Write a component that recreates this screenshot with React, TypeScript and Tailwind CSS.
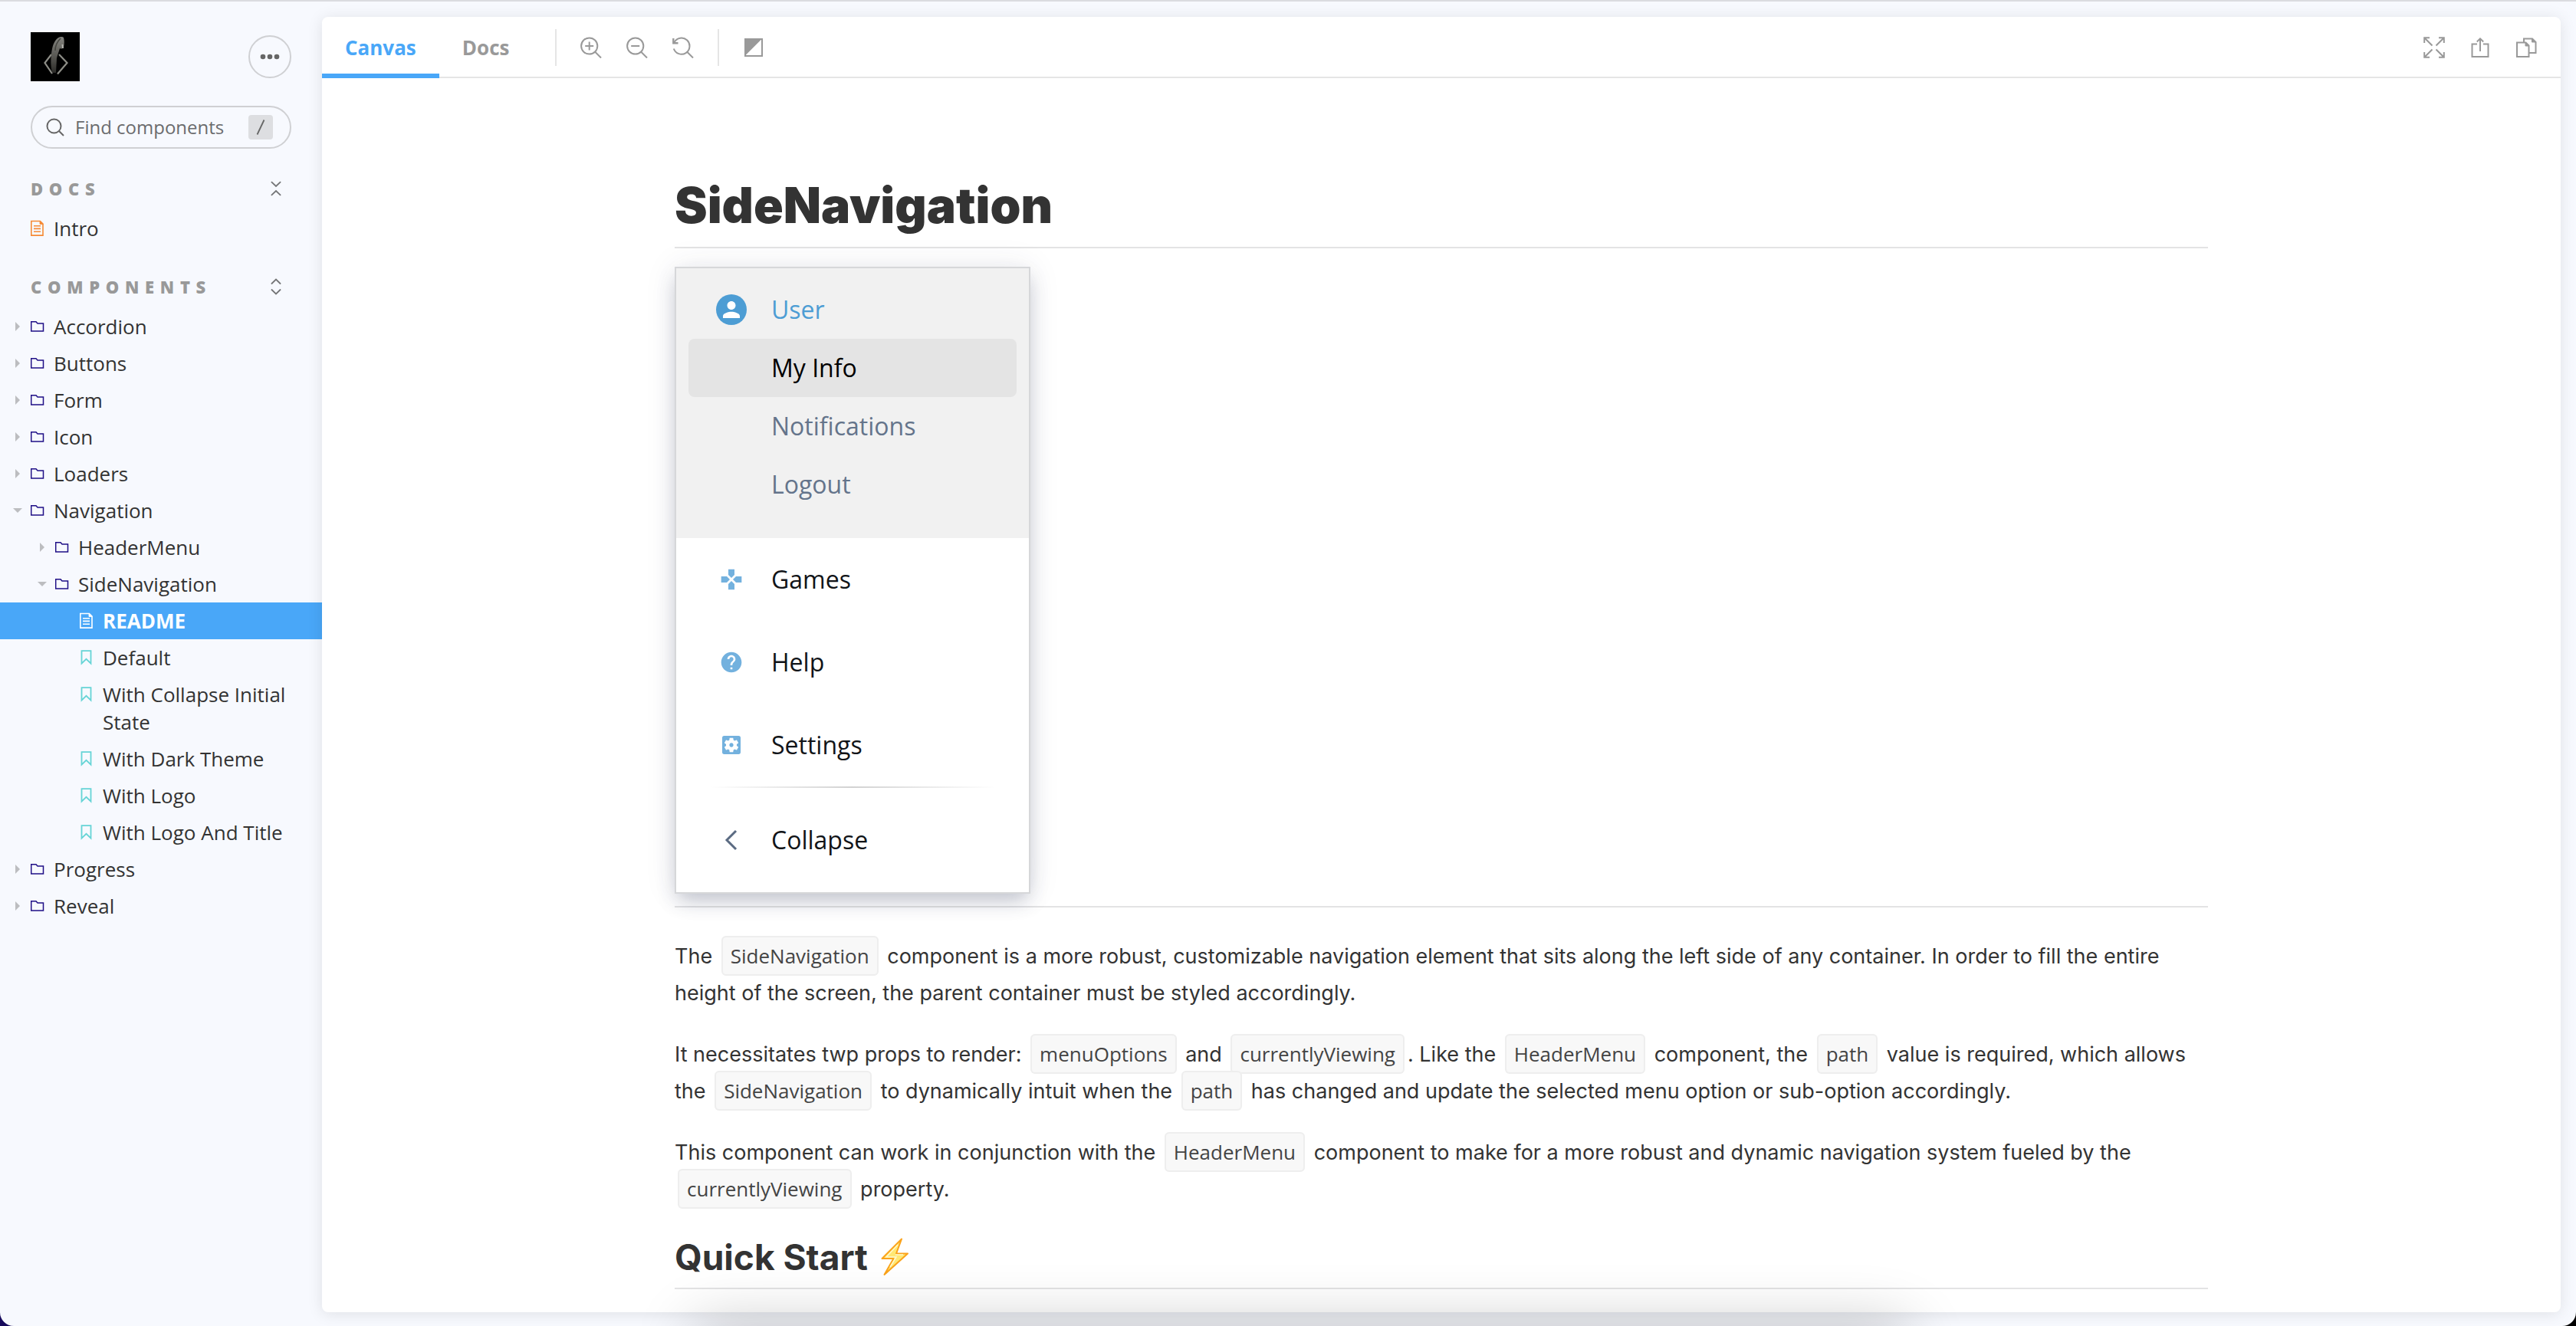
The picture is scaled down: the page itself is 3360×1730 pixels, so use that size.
import React from "react";
import { MdGames, MdHelp, MdSettingsApplications } from "react-icons/md";

type Kind = "folder" | "document" | "story";

type TreeItem = {
  label: string;
  kind: Kind;
  depth: 0 | 1 | 2;
  open?: boolean;
  selected?: boolean;
};

const components: TreeItem[] = [
  { label: "Accordion", kind: "folder", depth: 0 },
  { label: "Buttons", kind: "folder", depth: 0 },
  { label: "Form", kind: "folder", depth: 0 },
  { label: "Icon", kind: "folder", depth: 0 },
  { label: "Loaders", kind: "folder", depth: 0 },
  { label: "Navigation", kind: "folder", depth: 0, open: true },
  { label: "HeaderMenu", kind: "folder", depth: 1 },
  { label: "SideNavigation", kind: "folder", depth: 1, open: true },
  { label: "README", kind: "document", depth: 2, selected: true },
  { label: "Default", kind: "story", depth: 2 },
  { label: "With Collapse Initial State", kind: "story", depth: 2 },
  { label: "With Dark Theme", kind: "story", depth: 2 },
  { label: "With Logo", kind: "story", depth: 2 },
  { label: "With Logo And Title", kind: "story", depth: 2 },
  { label: "Progress", kind: "folder", depth: 0 },
  { label: "Reveal", kind: "folder", depth: 0 },
];

const indent = { 0: "pl-4", 1: "pl-12", 2: "pl-20" };

function KindIcon({ kind, selected }: { kind: Kind; selected?: boolean }) {
  if (kind === "folder") {
    return (
      <svg viewBox="0 0 18 24" className="h-6 w-[18px] text-[#1f0f86]" fill="none" stroke="currentColor" strokeWidth="1.5">
        <path d="M0.700 5.700h6.300l2 2.200h7.500v10.200H0.700z" />
      </svg>
    );
  }
  if (kind === "story") {
    return (
      <svg viewBox="0 0 18 24" className="h-6 w-[18px] text-[#66d4d6]" fill="none" stroke="currentColor" strokeWidth="1.8">
        <path d="M2.500 3.200h12v16.400l-6-5.800-6 5.800z" />
      </svg>
    );
  }
  return (
    <svg
      viewBox="0 0 18 24"
      className={selected ? "h-6 w-[18px] text-white" : "h-6 w-[18px] text-[#f68a35]"}
      fill="none"
      stroke="currentColor"
      strokeWidth="1.6"
    >
      <path d="M0.800 2.500h11.600l3.600 3.600v15H0.800z" />
      <path d="M12 2.300v4.200h4.200z" fill="currentColor" strokeWidth="0.8" />
      <path d="M4 8.800h9M4 12.400h9M4 16.200h9" />
    </svg>
  );
}

function TreeRow({ item }: { item: TreeItem }) {
  return (
    <li>
      <a
        href="#"
        className={`flex w-full items-start py-1.5 pr-8 text-[26px] leading-9 ${indent[item.depth]} ${
          item.selected ? "bg-[#49a7f8] font-bold text-white" : "text-[#333]"
        }`}
      >
        <span className="flex h-9 w-6 shrink-0 items-center">
          {item.kind === "folder" &&
            (item.open ? (
              <svg viewBox="0 0 14 12" className="h-3 w-3.5 text-[#bcbdc0]" fill="currentColor">
                <path d="M1 3h12L7 9z" />
              </svg>
            ) : (
              <svg viewBox="0 0 14 12" className="h-3 w-3.5 text-[#bcbdc0]" fill="currentColor">
                <path d="M4 0l6 6-6 6z" />
              </svg>
            ))}
        </span>
        <span className="mr-3 flex h-9 shrink-0 items-center">
          <KindIcon kind={item.kind} selected={item.selected} />
        </span>
        <span>{item.label}</span>
      </a>
    </li>
  );
}

function SectionHeading({ title, expand }: { title: string; expand?: boolean }) {
  return (
    <div className="flex h-8 items-center justify-between pr-[47px] pl-10">
      <h2 className="text-[22px] leading-[30px] font-extrabold tracking-[0.35em] text-[#999]">{title}</h2>
      <button type="button" aria-label={expand ? "Expand all" : "Collapse all"} className="px-1.5">
        <svg viewBox="0 0 14 22" className="h-[22px] w-3.5 text-[#747577]" fill="none" stroke="currentColor" strokeWidth="1.8" strokeLinecap="round">
          {expand ? <path d="M1.4 7L7 1.6 12.6 7M1.4 15L7 20.4l5.6-5.4" /> : <path d="M1.4 2.6L7 8l5.6-5.4M1.4 19.4L7 14l5.6 5.4" />}
        </svg>
      </button>
    </div>
  );
}

function Logo() {
  return (
    <svg viewBox="0 0 64 64" className="size-16" aria-label="Logo">
      <defs>
        <filter id="soft">
          <feGaussianBlur stdDeviation="0.7" />
        </filter>
        <linearGradient id="figure" x1="0" y1="0" x2="0" y2="1">
          <stop offset="0" stopColor="#84847f" />
          <stop offset="0.5" stopColor="#5c5b56" />
          <stop offset="1" stopColor="#2b2b28" />
        </linearGradient>
      </defs>
      <rect width="64" height="64" fill="#000" />
      <g filter="url(#soft)">
        <path d="M27 29l-8.500 11L28 54M37 29l10.500 11L35 54.500" fill="none" stroke="#8d8d86" strokeWidth="2.200" />
        <path d="M33 10c3-4 8-5 10-3 1 4 1 8 0 12-1 3-4 3-5 2-1 4-3 8-4 13l-1 19h-5c-2-8-2-17-1-25 1-7 2-13 6-18z" fill="url(#figure)" />
        <path d="M39 8c-4 4-7 10-7 16" fill="none" stroke="#44443f" strokeWidth="1.600" />
        <path d="M41.500 16l.5 5" stroke="#b5b5b0" strokeWidth="2" />
      </g>
    </svg>
  );
}

function Sidebar() {
  return (
    <aside className="flex w-[420px] shrink-0 flex-col">
      <div className="flex items-center justify-between px-10 pt-10">
        <a href="#">
          <Logo />
        </a>
        <button type="button" aria-label="Shortcuts" className="flex size-14 items-center justify-center rounded-full border-2 border-[#cfd0d3]">
          <svg viewBox="0 0 26 8" className="h-2 w-[26px] text-[#666]" fill="currentColor">
            <circle cx="4" cy="4" r="3.300" />
            <circle cx="13" cy="4" r="3.300" />
            <circle cx="22" cy="4" r="3.300" />
          </svg>
        </button>
      </div>
      <label className="mx-10 mt-8 flex h-14 items-center rounded-full border-2 border-[#cfd0d3] pr-[22px] pl-[18px]">
        <svg viewBox="0 0 24 24" className="size-6 shrink-0 text-[#666]" fill="none" stroke="currentColor" strokeWidth="2">
          <circle cx="10.500" cy="10.500" r="9" />
          <path d="M17 17l6 6" />
        </svg>
        <input
          type="text"
          aria-label="Find components"
          placeholder="Find components"
          className="ml-3.5 min-w-0 flex-1 bg-transparent text-2xl text-[#333] outline-none placeholder:text-[#6b6c6e]"
        />
        <kbd className="flex size-8 items-center justify-center rounded bg-[#dddee1]">
          <svg viewBox="0 0 12 22" className="h-[22px] w-3 text-[#666]" fill="none" stroke="currentColor" strokeWidth="1.800">
            <path d="M1.500 20.500l9-19" />
          </svg>
        </kbd>
      </label>

      <nav aria-label="Docs" className="mt-9">
        <SectionHeading title="DOCS" />
        <ul className="mt-3">
          <TreeRow item={{ label: "Intro", kind: "document", depth: 0 }} />
        </ul>
      </nav>
      <nav aria-label="Components" className="mt-9">
        <SectionHeading title="COMPONENTS" expand />
        <ul className="mt-3">
          {components.map((item) => (
            <TreeRow key={item.label} item={item} />
          ))}
        </ul>
      </nav>
    </aside>
  );
}

function ToolButton({ label, children }: { label: string; children: React.ReactNode }) {
  return (
    <button type="button" aria-label={label} className="flex size-14 items-center justify-center text-[#999]">
      <svg viewBox="0 0 28 28" className="size-7" fill="none" stroke="currentColor" strokeWidth="2">
        {children}
      </svg>
    </button>
  );
}

function Toolbar() {
  return (
    <div className="flex h-20 shrink-0 items-stretch justify-between border-b-2 border-[#e5e5e5] pt-0.5">
      <div className="flex items-center">
        <div role="tablist" className="flex items-stretch self-stretch text-[26px] font-bold">
          <button type="button" role="tab" aria-selected="true" className="-mb-0.5 border-b-6 border-[#49a7f8] px-[30px] pt-1 text-[#49a7f8]">
            Canvas
          </button>
          <button type="button" role="tab" aria-selected="false" className="px-[30px] text-[#999]">
            Docs
          </button>
        </div>
        <span className="ml-[30px] h-12 w-0.5 bg-[#e5e5e5]" />
        <div className="ml-[17px] flex gap-1">
          <ToolButton label="Zoom in">
            <circle cx="11.700" cy="12" r="10.600" />
            <path d="M19 19.500l8 8M11.700 6.500v11M6.200 12h11" />
          </ToolButton>
          <ToolButton label="Zoom out">
            <circle cx="11.700" cy="12" r="10.600" />
            <path d="M19 19.500l8 8M6.200 12h11" />
          </ToolButton>
          <ToolButton label="Reset zoom">
            <path d="M2.500 7.200A10.600 10.600 0 1 1 1.800 15.500M19 19.500l8 8" />
            <path d="M1.300 2v6.200h6.200" strokeWidth="2.400" />
          </ToolButton>
        </div>
        <span className="ml-[17px] h-12 w-0.5 bg-[#e5e5e5]" />
        <div className="ml-[17px]">
          <ToolButton label="Change background">
            <path d="M3 3h22v22H3z" />
            <path d="M3 3h21.500L3 24.500z" fill="currentColor" stroke="none" />
          </ToolButton>
        </div>
      </div>
      <div className="flex items-center gap-1 pr-[17px]">
        <ToolButton label="Go full screen">
          <path d="M1.200 8V1.200H8M1.200 1.200l10.300 10.300M20 1.200h6.800V8M26.800 1.200L16.500 11.500M1.200 20v6.800H8M1.200 26.800l10.300-10.300M20 26.800h6.800V20M26.800 26.800L16.500 16.500" />
        </ToolButton>
        <ToolButton label="Open canvas in new tab">
          <path d="M10 9.500H3.500V26h21V9.500H18M14 19V2.500M9.800 6.500L14 2.300l4.200 4.200" />
        </ToolButton>
        <ToolButton label="Copy canvas link">
          <path d="M2 7.500h11.500l4 4V26H2zM11 7.500v-5h11l4.500 4.500v14H17.500" />
          <path d="M13 7.500v4.500h4.500zM21.500 2.500V7h4.500z" fill="currentColor" strokeWidth="1" />
        </ToolButton>
      </div>
    </div>
  );
}

function MenuRow({ label, icon, className }: { label: string; icon?: React.ReactNode; className: string }) {
  return (
    <a href="#" className={`flex items-center ${className}`}>
      <span className="flex w-10 shrink-0 items-center justify-center">{icon}</span>
      <span className="ml-8">{label}</span>
    </a>
  );
}

function SideMenu() {
  return (
    <nav
      aria-label="Example menu"
      className="w-[464px] border-2 border-[#d6d7d9] bg-white text-[32px] leading-[44px] text-[#111418] shadow-[0_0_40px_rgba(50,50,93,0.09),0_12px_24px_-4px_rgba(50,60,93,0.28)]"
    >
      <div className="bg-[#f1f1f1] px-4 pt-4 pb-8 text-[#64748b]">
        <MenuRow
          label="User"
          className="h-[76px] px-9 text-[#4d9dd4]"
          icon={
            <svg viewBox="0 0 40 40" className="size-10">
              <circle cx="20" cy="20" r="20" fill="#4d9dd4" />
              <path
                transform="translate(3.500 3.500) scale(1.375)"
                fill="#fff"
                d="M12 12c2.210 0 4-1.790 4-4s-1.790-4-4-4-4 1.790-4 4 1.790 4 4 4zm0 2c-2.670 0-8 1.340-8 4v2h16v-2c0-2.660-5.330-4-8-4z"
              />
            </svg>
          }
        />
        <MenuRow label="My Info" className="h-[76px] rounded-lg bg-[#e4e4e4] px-9 text-black" />
        <MenuRow label="Notifications" className="h-[76px] px-9" />
        <MenuRow label="Logout" className="h-[76px] px-9" />
      </div>
      <MenuRow label="Games" className="h-[108px] px-[52px]" icon={<MdGames className="size-8 text-[#73b1de]" />} />
      <MenuRow label="Help" className="h-[108px] px-[52px]" icon={<MdHelp className="size-8 text-[#73b1de]" />} />
      <MenuRow label="Settings" className="h-[108px] px-[52px]" icon={<MdSettingsApplications className="size-8 text-[#73b1de]" />} />
      <div className="mx-11 h-0.5 bg-linear-to-r from-transparent via-[#d2d2d2] to-transparent" />
      <MenuRow
        label="Collapse"
        className="my-3.5 h-[108px] px-[52px]"
        icon={
          <svg viewBox="0 0 32 32" className="size-8 text-[#5b6b82]" fill="none" stroke="currentColor" strokeWidth="3">
            <path d="M22 4L10 16l12 12" />
          </svg>
        }
      />
    </nav>
  );
}

function Code({ children }: { children: React.ReactNode }) {
  return (
    <code className="mx-1 rounded-md border-2 border-[#eee] bg-[#f8f8f8] px-2.5 py-1.5 font-['Open_Sans',sans-serif] text-[26px] leading-none whitespace-nowrap text-[#444]">
      {children}
    </code>
  );
}

function Readme() {
  return (
    <article className="mx-auto w-full max-w-[2000px] pt-[124px] font-['Inter',sans-serif] text-[27px] leading-[48px] text-[#333]">
      <h1 className="border-b-2 border-[#e3e3e4] pb-3 text-[64px] leading-[84px] font-black">SideNavigation</h1>
      <div className="mt-6 border-b-2 border-[#e3e3e4] pb-4 font-['Open_Sans',sans-serif]">
        <SideMenu />
      </div>
      <p className="mt-10">
        The <Code>SideNavigation</Code> component is a more robust, customizable navigation element that sits along the left side of any container. In order to fill the entire height of the screen, the parent container must be styled accordingly.
      </p>
      <p className="mt-8">
        It necessitates twp props to render: <Code>menuOptions</Code> and <Code>currentlyViewing</Code>. Like the <Code>HeaderMenu</Code> component, the <Code>path</Code> value is required, which allows the <Code>SideNavigation</Code> to dynamically intuit when the <Code>path</Code> has changed and update the selected menu option or sub-option accordingly.
      </p>
      <p className="mt-8">
        This component can work in conjunction with the <Code>HeaderMenu</Code> component to make for a more robust and dynamic navigation system fueled by the <Code>currentlyViewing</Code> property.
      </p>
      <h2 className="mt-8 flex items-center gap-4 border-b-2 border-[#e3e3e4] pb-2 text-[46px] leading-[64px] font-bold">
        Quick Start
        <svg viewBox="0 0 38 50" className="h-[50px] w-[38px]" role="img" aria-label="Lightning">
          <path d="M28 1.500L2.500 27h15L5.500 48 36 20.500H21z" fill="#ffe873" stroke="#fba31b" strokeWidth="2" strokeLinejoin="round" />
          <path d="M23 9L8 25h13l-8 13M20 22h10" fill="none" stroke="#fff8cc" strokeWidth="1.500" />
        </svg>
      </h2>
    </article>
  );
}

export default function App() {
  return (
    <div className="h-screen bg-linear-to-r from-[#170a5c] to-black">
      <div className="relative flex h-full overflow-hidden rounded-b-[18px] border-t-2 border-[#dbdce0] bg-[#f7f9fe] font-['Open_Sans',sans-serif]">
        <Sidebar />
        <main className="mt-5 mr-5 mb-[18px] flex min-w-0 flex-1 flex-col overflow-hidden rounded-lg bg-white shadow-[0_2px_20px_rgba(0,0,0,0.1)]">
          <Toolbar />
          <Readme />
        </main>
        <div className="pointer-events-none absolute top-full right-[26%] left-[27%] h-40 shadow-[0_0_80px_rgba(0,0,0,0.24)]" />
      </div>
    </div>
  );
}
